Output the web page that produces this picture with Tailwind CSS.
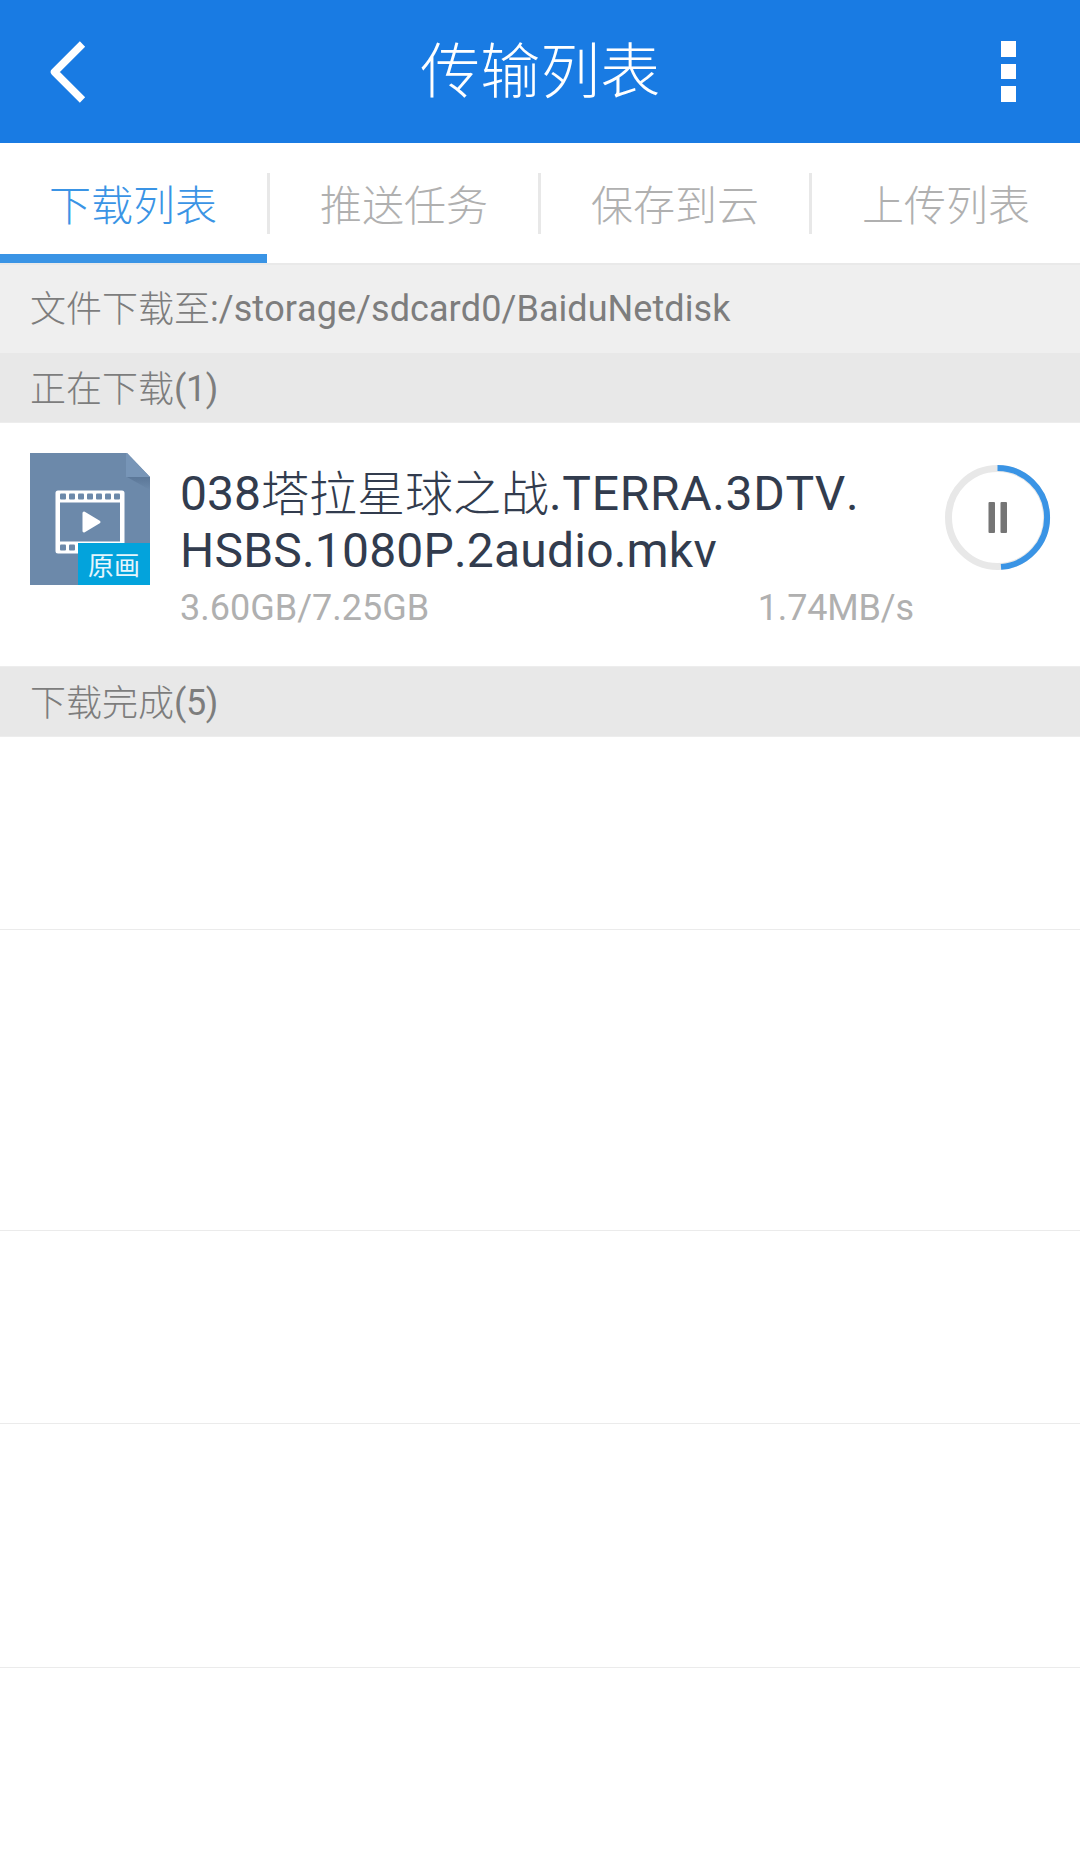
<!DOCTYPE html>
<html lang="zh-CN">
<head>
<meta charset="utf-8">
<title>传输列表</title>
<script src="https://cdn.jsdelivr.net/npm/@tailwindcss/browser@4"></script>
</head>
<body class="w-[1080px] h-[1849px] overflow-hidden flex flex-col bg-white font-['Roboto','Noto_Sans_CJK_SC',sans-serif] [font-kerning:none] text-[36px] text-[#7d7d7d]">
  <header class="h-[143px] shrink-0 bg-[#197be3] flex items-center justify-between pl-[46px] pr-[64px] text-white">
    <svg class="w-[40px] h-[64px]" viewBox="0 0 40 64" fill="none" stroke="#fff" stroke-width="7.500" stroke-linejoin="round"><path d="M36.500 4 8.500 32 36.500 60"/></svg>
    <h1 class="text-[60px] leading-[80px] font-light -ml-[6px] mt-[3px]">传输列表</h1>
    <span class="flex flex-col gap-[7px]"><i class="size-[15.500px] bg-white"></i><i class="size-[15.500px] bg-white"></i><i class="size-[15.500px] bg-white"></i></span>
  </header>
  <nav class="h-[120px] shrink-0 flex text-[42px] leading-[60px] font-light text-[#b0b0b0] text-center">
    <a class="w-[267px] pt-[34px] pr-[1px] h-full border-b-[9px] border-[#3a94e5] text-[#3a94e5]">下载列表</a>
    <i class="w-[3px] h-[61px] mt-[30px] bg-[#e8e8e8]"></i>
    <a class="w-[268px] pt-[34px]">推送任务</a>
    <i class="w-[3px] h-[61px] mt-[30px] bg-[#e8e8e8]"></i>
    <a class="w-[268px] pt-[34px]">保存到云</a>
    <i class="w-[3px] h-[61px] mt-[30px] bg-[#e8e8e8]"></i>
    <a class="w-[268px] pt-[34px]">上传列表</a>
  </nav>
  <div class="h-[90px] shrink-0 bg-[#efefef] border-t-2 border-[#e9e9e9] pl-[30px] pt-[19px] leading-[50px] whitespace-nowrap flex"><span class="font-light pt-[1px]">文件下载至</span><span class="tracking-[0.06px]">:/storage/sdcard0/BaiduNetdisk</span></div>
  <div class="h-[70px] shrink-0 bg-[#e8e8e8] border-b border-[#ededed] pl-[30px] pt-[11px] leading-[50px] flex"><span class="font-light pt-[1px]">正在下载</span><span class="tracking-[-0.4px]">(1)</span></div>
  <section class="h-[243px] shrink-0 flex pl-[30px] pt-[30px]">
    <svg class="w-[120px] h-[132px] shrink-0" viewBox="0 0 120 132">
      <defs><linearGradient id="fold" x1="0" y1="0" x2="0" y2="1"><stop offset="0" stop-color="#5b7798"/><stop offset="1" stop-color="#6c89aa"/></linearGradient></defs>
      <path d="M0 0H97L120 24V132H0Z" fill="#6c89aa"/>
      <path d="M97 24H120V37Z" fill="url(#fold)"/>
      <path d="M97 0 120 24H96V0Z" fill="#7795b7"/>
      <path fill="#fff" fill-rule="evenodd" d="M28 37.500H92Q94.500 37.500 94.500 40V98Q94.500 100.500 92 100.500H28Q25.500 100.500 25.500 98V40Q25.500 37.500 28 37.500ZM30 49.500V88.500H90V49.500Z"/>
      <g fill="#6c89aa"><rect x="30" y="40.500" width="6" height="6" rx="1"/><rect x="39" y="40.500" width="6" height="6" rx="1"/><rect x="48" y="40.500" width="6" height="6" rx="1"/><rect x="57" y="40.500" width="6" height="6" rx="1"/><rect x="66" y="40.500" width="6" height="6" rx="1"/><rect x="75" y="40.500" width="6" height="6" rx="1"/><rect x="84" y="40.500" width="6" height="6" rx="1"/><rect x="30" y="91.500" width="6" height="6" rx="1"/><rect x="39" y="91.500" width="6" height="6" rx="1"/></g>
      <path d="M54 60 69 69 54 78Z" fill="#fff" stroke="#fff" stroke-width="3" stroke-linejoin="round"/>
      <rect x="48" y="90" width="72" height="42" fill="#03a3dc"/>
      <text x="58" y="122" font-size="26" fill="#e6f6fc" font-family="Noto Sans CJK SC">原画</text>
    </svg>
    <div class="ml-[30px] w-[734px] pt-[12px]">
      <h2 class="text-[48px] leading-[57px] text-[#323c4e] whitespace-nowrap">038<span class="font-light relative top-[1px]">塔拉星球之战</span><span class="tracking-[0.7px]">.TERRA.3DTV.</span><br><span class="tracking-[0.2px]">HSBS.1080P.2audio.mkv</span></h2>
      <p class="flex justify-between leading-[50px] pt-[4px] text-[#b0b0b0]"><span>3.60GB/7.25GB</span><span class="tracking-[-0.15px]">1.74MB/s</span></p>
    </div>
    <svg class="w-[106px] h-[106px] shrink-0 ml-[31px] mt-[12px]" viewBox="0 0 106 106" fill="none">
      <circle cx="52.500" cy="52.500" r="49" stroke="#e8e8e8" stroke-width="7"/>
      <path d="M52.500 3A49.500 49.500 0 0 1 56 101.880" stroke="#3a94e5" stroke-width="6"/>
      <rect x="43.500" y="37" width="6.500" height="31" rx="1" fill="#757575"/><rect x="55.500" y="37" width="6.500" height="31" rx="1" fill="#757575"/>
    </svg>
  </section>
  <div class="h-[71px] shrink-0 bg-[#e8e8e8] border-y border-[#ededed] pl-[30px] pt-[11px] leading-[50px] flex"><span class="font-light pt-[1px]">下载完成</span><span class="tracking-[-0.4px]">(5)</span></div>
  <ul class="shrink-0">
    <li class="h-[193px] border-b border-[#ebebeb]"></li>
    <li class="h-[301px] border-b border-[#ebebeb]"></li>
    <li class="h-[193px] border-b border-[#ebebeb]"></li>
    <li class="h-[244px] border-b border-[#ebebeb]"></li>
  </ul>
</body>
</html>
